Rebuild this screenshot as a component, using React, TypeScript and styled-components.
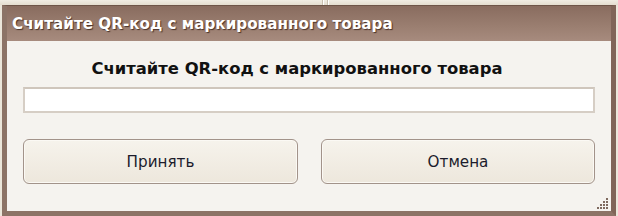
import React from "react";
import styled, { createGlobalStyle } from "styled-components";

const Global = createGlobalStyle`
  html, body { margin: 0; padding: 0; }
  body {
    width: 618px;
    height: 216px;
    overflow: hidden;
    background: #ebe6da;
    font-family: "DejaVu Sans", Verdana, sans-serif;
  }
`;

const Page = styled.div`
  display: flex;
  flex-direction: column;
  width: 618px;
  height: 216px;
`;

const TopStrip = styled.div`
  height: 5px;
  display: flex;
  background: linear-gradient(#f1ede3, #e4ddcf);
`;

const Tab = styled.div<{ $w: number }>`
  width: ${(p) => p.$w}px;
  border-right: 1px solid #c9c0b0;
  box-shadow: 1px 0 0 #ffffff;
`;

const Window = styled.div`
  margin-left: 2px;
  width: 614px;
  flex: 1;
  display: flex;
  flex-direction: column;
  border: 5px solid #8c7366;
  border-top: 1px solid #6e5548;
  border-right-color: #806558;
  box-sizing: border-box;
`;

const TitleBar = styled.div`
  height: 35px;
  display: flex;
  align-items: center;
  padding-left: 5px;
  padding-top: 1px;
  box-sizing: border-box;
  background: linear-gradient(#896c5f, #9b7f71 60%, #a78b7e);
  color: #ffffff;
  font-size: 15.2px;
  font-weight: bold;
  text-shadow: 1px 1px 1px #4a3228;
  white-space: nowrap;
`;

const Content = styled.div`
  flex: 1;
  background: #f5f3ef;
  display: flex;
  flex-direction: column;
  padding: 0 16px;
  position: relative;
`;

const Heading = styled.div`
  text-align: center;
  font-size: 16.4px;
  font-weight: bold;
  color: #111;
  margin-top: 18px;
  padding-right: 24px;
  height: 20px;
  line-height: 20px;
  white-space: nowrap;
`;

const Input = styled.input`
  margin-top: 8px;
  height: 26px;
  box-sizing: border-box;
  border: 2px solid #d6cec5;
  border-top-color: #cfc6bc;
  background: #ffffff;
  outline: none;
`;

const Buttons = styled.div`
  margin-top: 26px;
  display: grid;
  grid-template-columns: 275px 274px;
  justify-content: space-between;
`;

const Button = styled.button`
  height: 45px;
  border: 1px solid #a2938a;
  border-radius: 6px;
  background: linear-gradient(#f6f3ec, #ede7dc);
  box-shadow: inset 0 0 0 1px #fbf9f4;
  font-family: "DejaVu Sans", Verdana, sans-serif;
  font-size: 15.2px;
  color: #1c1c2c;
  padding: 0;
`;

const Grip = styled.svg`
  position: absolute;
  right: 2px;
  bottom: 1px;
`;

export default function App() {
  return (
    <>
      <Global />
      <Page>
        <TopStrip>
          <Tab $w={322} />
          <Tab $w={4} />
        </TopStrip>
        <Window>
          <TitleBar>Считайте QR-код с маркированного товара</TitleBar>
          <Content>
            <Heading>Считайте QR-код с маркированного товара</Heading>
            <Input type="text" />
            <Buttons>
              <Button>Принять</Button>
              <Button>Отмена</Button>
            </Buttons>
            <Grip width="12" height="12" viewBox="0 0 12 12">
              {[
                [9, 0],
                [9, 3],
                [6, 3],
                [9, 6],
                [6, 6],
                [3, 6],
                [9, 9],
                [6, 9],
                [3, 9],
                [0, 9],
              ].map(([x, y], i) => (
                <rect key={i} x={x} y={y} width="2" height="2" fill="#7f6a5f" />
              ))}
            </Grip>
          </Content>
        </Window>
      </Page>
    </>
  );
}
